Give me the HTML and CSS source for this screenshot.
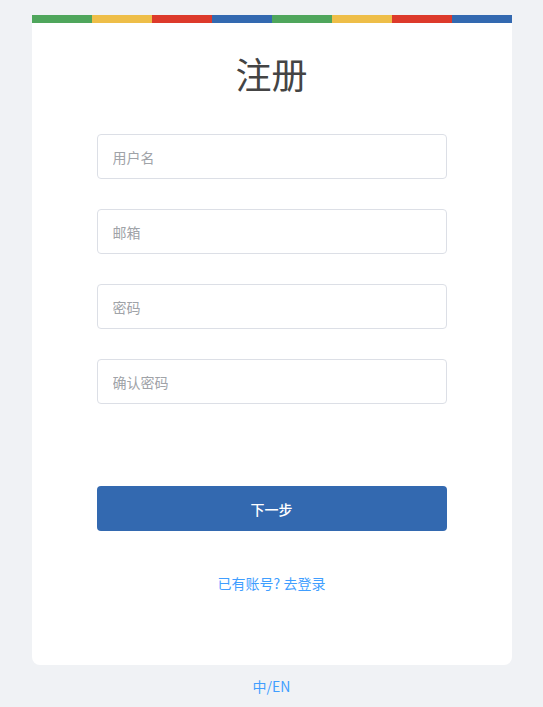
FILE: index.html
```html
<!DOCTYPE html>
<html lang="zh">
<head>
<meta charset="utf-8">
<title>注册</title>
<link rel="stylesheet" href="styles.css">
</head>
<body>
<div class="page">
  <div class="card">
    <div class="stripe">
      <span class="g"></span><span class="y"></span><span class="r"></span><span class="b"></span>
      <span class="g"></span><span class="y"></span><span class="r"></span><span class="b"></span>
    </div>
    <div class="card-body">
      <h1 class="title">注册</h1>
      <form class="form">
        <input class="field" type="text" placeholder="用户名">
        <input class="field" type="text" placeholder="邮箱">
        <input class="field" type="password" placeholder="密码">
        <input class="field" type="password" placeholder="确认密码">
        <button class="btn" type="button">下一步</button>
      </form>
      <div class="login"><a href="#">已有账号? 去登录</a></div>
    </div>
  </div>
  <div class="lang"><a href="#">中/EN</a></div>
</div>
</body>
</html>
```

FILE: styles.css
```css
* { box-sizing: border-box; }
html, body {
  margin: 0;
  padding: 0;
  background: #f0f2f5;
  font-family: "Noto Sans CJK SC", "Noto Sans", "Liberation Sans", sans-serif;
}
.page {
  padding-top: 15px;
}
.card {
  width: 480px;
  margin: 0 auto;
  background: #fff;
  border-radius: 0 0 8px 8px;
  overflow: hidden;
}
.stripe {
  display: flex;
  height: 8px;
}
.stripe span { flex: 1; }
.stripe .g { background: #4fa65c; }
.stripe .y { background: #eebe48; }
.stripe .r { background: #dd3a2b; }
.stripe .b { background: #3369b0; }
.card-body {
  padding: 23px 65px 72px;
}
.title {
  margin: 0 0 34px;
  font-size: 36px;
  line-height: 54px;
  font-weight: 400;
  color: #444;
  text-align: center;
}
.form {
  display: flex;
  flex-direction: column;
  gap: 30px;
}
.field {
  display: block;
  width: 100%;
  height: 45px;
  padding: 0 15px;
  border: 1px solid #dcdfe6;
  border-radius: 4px;
  font-family: inherit;
  font-size: 14px;
  color: #333;
  outline: none;
}
.field::placeholder { color: #a0a3a8; }
.btn {
  margin-top: 52px;
  height: 45px;
  width: 100%;
  border: none;
  border-radius: 4px;
  background: #3369b0;
  color: #fff;
  font-family: inherit;
  font-size: 14px;
  font-weight: 500;
}
.login {
  margin-top: 42px;
  text-align: center;
  font-size: 14px;
  line-height: 20px;
}
.login a, .lang a {
  color: #409eff;
  text-decoration: none;
}
.lang {
  margin-top: 11px;
  text-align: center;
  font-size: 14px;
  line-height: 20px;
}
```
